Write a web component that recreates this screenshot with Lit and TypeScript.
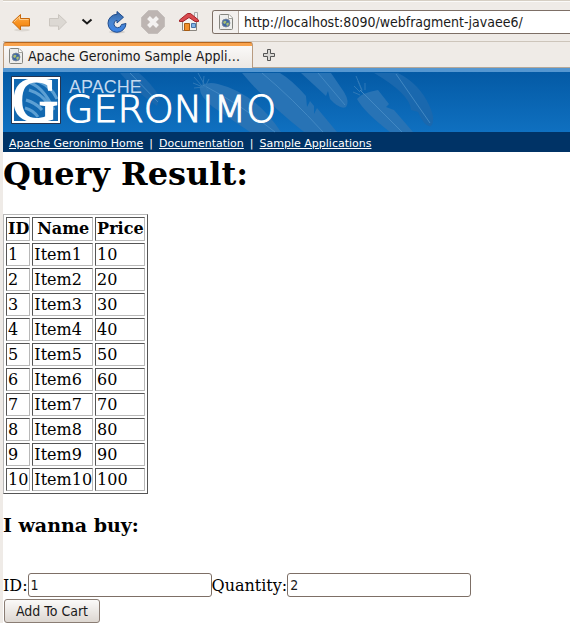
import { LitElement, html, css, svg } from "lit";
import { customElement } from "lit/decorators.js";

const pageIcon = html`<svg class="page-icon" width="16" height="16" viewBox="0 0 16 16" aria-hidden="true">
  <path d="M1.500 1.500q0-1 1-1h8.500l3.500 3.500v10.500q0 1-1 1h-11q-1 0-1-1z" fill="#eeeeec" stroke="#85857f" />
  <path d="M10.500 .5v4h4" fill="#fff" stroke="#a5a59f" />
  <circle cx="8" cy="9" r="4" fill="#3c66a4" stroke="#7d8898" stroke-width=".8" />
  <path d="M5 8l2-1.500 1.500 1-1 2-1.500.5zM8.500 9l2-.5.5 1.500-1.500 2-1.200-1z" fill="#a9bf72" />
</svg>`;

const items = Array.from({ length: 10 }, (_, i) => ({ id: i + 1, name: `Item${i + 1}`, price: (i + 1) * 10 }));

const feather = (tone: string, vane: string, quill: string) =>
  svg`<path class=${tone} d=${vane} /><path class="quill" d=${quill} />`;

@customElement("browser-chrome")
export class BrowserChrome extends LitElement {
  static styles = css`
    :host { display: block; font: 14px/20px "DejaVu Sans Condensed", "DejaVu Sans", sans-serif; color: #1a1a1a; }
    .edge { height: 1px; background: #d6cfc4; border-bottom: 1px solid #fbfaf8; }
    .toolbar { display: flex; align-items: center; height: 40px; box-sizing: border-box; border-bottom: 1px solid #cdc5bb; }
    .tool { border: 0; padding: 0; margin: 0 0 0 12px; background: none; width: 24px; height: 24px; flex: none; }
    .tool svg { display: block; }
    .back { margin-left: 6px; }
    .history { width: 12px; }
    .address { display: flex; align-items: center; flex: 1; min-width: 0; height: 24px; box-sizing: border-box; margin-left: 11px; border: 1px solid #7d6f66; border-right: 0; border-radius: 3px 0 0 3px; background: #fff; }
    .site { display: flex; align-items: center; justify-content: center; width: 25px; height: 100%; background: #f3f0ee; border-right: 1px solid #b3a9a1; border-radius: 2px 0 0 2px; flex: none; }
    .url { flex: 1; min-width: 0; border: 0; outline: 0; padding: 0 0 0 5px; margin: 0; background: none; font: inherit; color: #1a1a1a; }
    .tabs { display: flex; height: 26px; box-sizing: border-box; }
    .tab { display: flex; align-items: center; gap: 4px; width: 250px; box-sizing: border-box; padding: 0 4px; border: 1px solid #b89b80; border-top: 1px solid #b5651d; border-bottom: 0; border-radius: 3px 3px 0 0; background: linear-gradient(#f8a24c 0 3px, #faf9f8 3px, #ece8e4); font: inherit; color: inherit; text-align: left; }
    .title { flex: 1; min-width: 0; white-space: nowrap; }
    .new { flex: 1; display: flex; align-items: center; border-bottom: 1px solid #b5a899; padding-left: 10px; }
    .add { border: 0; background: none; padding: 0; width: 12px; height: 12px; }
    .add svg { display: block; }
    .page-icon { flex: none; }
  `;

  render() {
    return html`
      <div class="edge"></div>
      <div class="toolbar">
        <button class="tool back" aria-label="Back"><svg width="24" height="24" viewBox="0 0 24 24">
          <defs><linearGradient id="o" x2="0" y2="1"><stop stop-color="#fbb050" /><stop offset=".5" stop-color="#f99424" /><stop offset="1" stop-color="#ef7f05" /></linearGradient></defs>
          <ellipse cx="13" cy="20" rx="8" ry="1.500" fill="#dcd7d1" />
          <path d="M3.500 12L11.500 4.500V8.500H20.500V16H11.500V20Z" fill="url(#o)" stroke="#c8680a" stroke-linejoin="round" />
          <path d="M5 12L10.500 6.700V9.500H19.500" fill="none" stroke="#fcc988" />
        </svg></button>
        <button class="tool" aria-label="Forward"><svg width="24" height="24" viewBox="0 0 24 24">
          <path d="M21.500 12L13.500 4.500V8.500H4.500V16H13.500V20Z" fill="#dcd8d3" stroke="#cbc6c0" stroke-linejoin="round" />
        </svg></button>
        <button class="tool history" aria-label="History"><svg width="12" height="24" viewBox="0 0 12 24">
          <path d="M1.500 9.500L6 13.500L10.500 9.500" fill="none" stroke="#1a1a1a" stroke-width="2" />
        </svg></button>
        <button class="tool" aria-label="Reload"><svg width="24" height="24" viewBox="0 0 24 24">
          <defs><linearGradient id="b" x2="0" y2="1"><stop stop-color="#3465a4" /><stop offset=".5" stop-color="#4a86d0" /><stop offset="1" stop-color="#3b83e8" /></linearGradient></defs>
          <ellipse cx="12" cy="22" rx="8" ry="1.500" fill="#d3ceca" />
          <path d="M12 1.500L18.500 7.200L12 13V10.200A3.800 3.800 0 1 0 16.500 14.500L21 13.500A9 9 0 1 1 12 4.300Z" fill="url(#b)" stroke="#1f4b8c" stroke-linejoin="round" />
        </svg></button>
        <button class="tool" aria-label="Stop"><svg width="24" height="24" viewBox="0 0 24 24">
          <path d="M7.500 .5h9l7 7v9l-7 7h-9l-7-7v-9z" fill="#bdb5b2" stroke="#c5bfbc" />
          <path d="M7.500 7.500l9 9M16.500 7.500l-9 9" stroke="#f4f2f1" stroke-width="4" />
        </svg></button>
        <button class="tool" aria-label="Home"><svg width="24" height="24" viewBox="0 0 24 24">
          <path d="M17.500 2.500h3v7h-3z" fill="#f1f1f1" stroke="#aaa" />
          <path d="M5.500 10L12 5L19.500 10V20.500H5.500z" fill="#f4f3f1" stroke="#8a8680" />
          <path d="M2.500 10L10.500 3.500H13.500L21.500 10V11.500H18L12 7.500L6 11.500H2.500Z" fill="#d84a4e" stroke="#a3252b" stroke-linejoin="round" />
          <path d="M7.500 13.500h5v7h-5z" fill="#f28f2a" stroke="#a85c12" />
          <path d="M14.500 13.500h4v4h-4z" fill="#7fb4e8" stroke="#4a74a8" />
        </svg></button>
        <div class="address"><span class="site">${pageIcon}</span>
          <input class="url" type="text" aria-label="Address" value="http://localhost:8090/webfragment-javaee6/" /></div>
      </div>
      <div class="tabs">
        <button class="tab">${pageIcon}<span class="title">Apache Geronimo Sample Appli…</span></button>
        <div class="new"><button class="add" aria-label="New tab"><svg width="12" height="12" viewBox="0 0 12 12">
          <path d="M4.500 .5h3v4h4v3h-4v4h-3v-4h-4v-3h4z" fill="#d9d7d4" stroke="#555" />
        </svg></button></div>
      </div>`;
  }
}

@customElement("geronimo-banner")
export class GeronimoBanner extends LitElement {
  static styles = css`
    :host { display: block; }
    .banner { height: 64px; box-sizing: border-box; border-top: 4px solid #5597d1; background: linear-gradient(#045aa5, #0f70c0); }
    .banner svg { display: block; overflow: visible; }
    .soft { fill: #1a68ae; }
    .clear { fill: #2873b5; }
    .quill { fill: none; stroke: #4288c3; }
    .barbs { fill: none; stroke: #2f79b8; }
    .streaks { fill: none; stroke: #5c9fd3; stroke-width: 3; }
    .apache { font: 18px "Liberation Sans", sans-serif; fill: #c3d9ef; }
    .geronimo { font: 200 38px "DejaVu Sans", sans-serif; fill: #fff; stroke: #fff; stroke-width: 1px; }
    .initial { font: 64px "Liberation Serif", serif; fill: #fff; stroke: #fff; stroke-width: 2px; }
    .links { display: flex; align-items: center; gap: 6px; height: 20px; padding: 3px 6px 0; background: #003366; color: #fff; font: 11px/17px "DejaVu Sans", sans-serif; box-sizing: border-box; }
    a { color: #fff; }
  `;

  render() {
    return html`
      <div class="banner"><svg width="460" height="60" viewBox="3 72 460 60" role="img" aria-label="Apache Geronimo">
        ${feather("soft", "M120 73Q136 92 157 106L160 97Q150 82 139 73Z", "M130 73L158 102")}
        ${feather("clear", "M200 86Q198 95 213 107L250 132H281Q255 93 218 84Q208 81 200 86Z", "M203 85Q240 104 275 132")}
        ${feather("clear", "M242 73Q268 104 304 132H337L317 108L314 114L314 106L310 101L307 107L306 96Q292 80 280 73Z", "M262 73Q292 98 323 132")}
        ${feather("clear", "M301 73L326 96L328 91L330 99Q340 110 346 107Q350 102 344 92L331 73Z", "M318 73L345 105")}
        ${feather("clear", "M357 99Q361 93 378 90L389 104L386 107L394 110L413 132H390Q364 112 357 99Z", "M360 90L402 132")}
        ${feather("soft", "M374 73Q410 94 411 110L418 112Q425 128 431 126Q436 120 430 107Q420 84 398 73Z", "M396 74L430 123")}
        <path class="barbs" d="M198 73l10 18M194 77l8 9M193 83l10 4M194 88l10-1M204 76l-1 9M209 79l-4 8M360 92l-6-6M362 91l-4-10M365 90v-7M360 95l-7-3M356 76l6 14" />
        <path d="M11.500 76.500h49v47h-49z" fill="#1268b0" stroke="#26344f" />
        <path class="streaks" d="M26 82Q42 84 54 110M29 90Q42 94 48 104M26 100Q36 103 42 110M25 108Q33 110 38 117M38 81Q52 87 57 99" />
        <path d="M13 78h46v44h-46z" fill="none" stroke="#fff" stroke-width="2" />
        <text class="initial" x="12" y="121">G</text>
        <text class="apache" x="69" y="93">APACHE</text>
        <text class="geronimo" x="64" y="122">GERONIMO</text>
      </svg></div>
      <nav class="links"><a href="#home">Apache Geronimo Home</a><span>|</span><a href="#docs">Documentation</a><span>|</span><a href="#samples">Sample Applications</a></nav>`;
  }
}

@customElement("app-root")
export class AppRoot extends LitElement {
  static styles = css`
    :host { display: block; background: #efebe7; font: 16px/19px "DejaVu Serif", serif; color: #000; }
    .frame { padding-left: 3px; }
    .page { background: #fff; }
    h1 { margin: 0; padding-top: 3px; font-size: 32px; line-height: 38px; }
    table { margin-top: 21px; border: 1px solid; border-color: #b8b8b8 #555 #555 #b8b8b8; border-spacing: 2px; }
    th, td { padding: 1px 0 1px 1px; border: 1px solid; border-color: #555 #b8b8b8 #b8b8b8 #555; text-align: left; }
    th { text-align: center; line-height: 20px; }
    h3 { margin: 20px 0 37px; font-size: 19px; line-height: 22px; }
    .fields { display: flex; align-items: center; }
    .field { box-sizing: border-box; width: 184px; height: 24px; margin: 0; padding: 0 2px; border: 1px solid #7d6f66; border-radius: 3px; background: #fff; font: 14px/20px "DejaVu Sans Condensed", "DejaVu Sans", sans-serif; color: #1a1a1a; }
    .submit { display: block; box-sizing: border-box; height: 24px; margin: 2px 0 0 1px; padding: 0 11px; border: 1px solid #8a7d74; border-radius: 3px; background: linear-gradient(#fbfaf9, #ddd7d1); font: 14px/20px "DejaVu Sans Condensed", "DejaVu Sans", sans-serif; color: #1a1a1a; }
  `;

  render() {
    return html`
      <div class="frame">
        <browser-chrome></browser-chrome>
        <main class="page">
          <geronimo-banner></geronimo-banner>
          <h1>Query Result:</h1>
          <table>
            <thead><tr><th>ID</th><th>Name</th><th>Price</th></tr></thead>
            <tbody>${items.map((i) => html`<tr><td>${i.id}</td><td>${i.name}</td><td>${i.price}</td></tr>`)}</tbody>
          </table>
          <h3>I wanna buy:</h3>
          <form @submit=${(e: Event) => e.preventDefault()}>
            <div class="fields">
              <label for="id">ID:</label><input class="field" id="id" type="text" value="1" />
              <label for="qty">Quantity:</label><input class="field" id="qty" type="text" value="2" />
            </div>
            <button class="submit" type="submit">Add To Cart</button>
          </form>
        </main>
      </div>`;
  }
}
